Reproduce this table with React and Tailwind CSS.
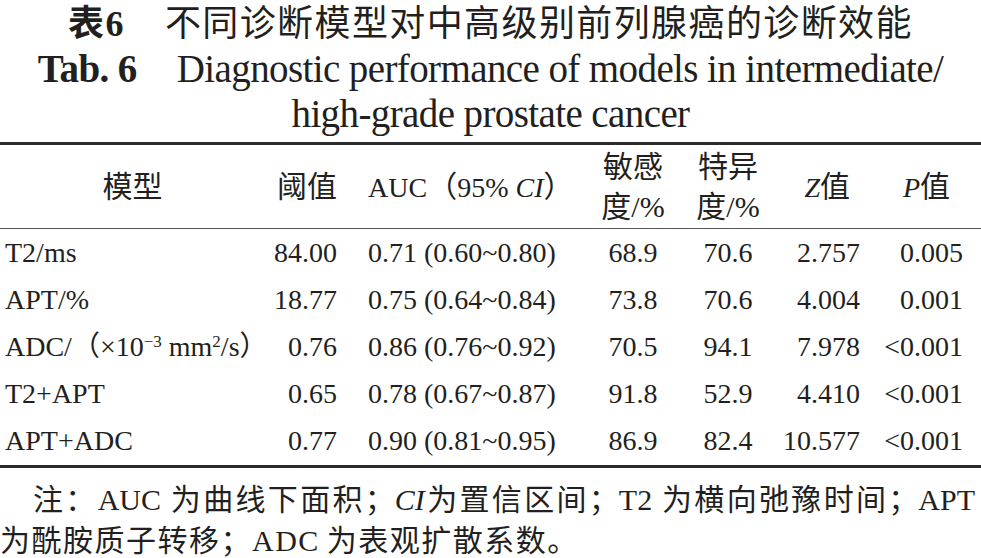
import React from "react";

const serif = { fontFamily: '"Liberation Serif", "Noto Sans CJK SC", serif' };

const rows = [
  ["T2/ms", "84.00", "0.71 (0.60~0.80)", "68.9", "70.6", "2.757", "0.005"],
  ["APT/%", "18.77", "0.75 (0.64~0.84)", "73.8", "70.6", "4.004", "0.001"],
  [
    <span key="adc">
      ADC/（×10<sup className="text-[17px]">−3</sup> mm<sup className="text-[17px]">2</sup>/s）
    </span>,
    "0.76",
    "0.86 (0.76~0.92)",
    "70.5",
    "94.1",
    "7.978",
    "<0.001",
  ],
  ["T2+APT", "0.65", "0.78 (0.67~0.87)", "91.8", "52.9", "4.410", "<0.001"],
  ["APT+ADC", "0.77", "0.90 (0.81~0.95)", "86.9", "82.4", "10.577", "<0.001"],
];

const cols = "grid grid-cols-[260px_77px_253px_86px_104px_80px_103px]";

export default function App() {
  return (
    <div
      className="w-[981px] h-[558px] bg-white text-[#231f20] flex flex-col overflow-hidden"
      style={serif}
    >
      {/* Title */}
      <div className="flex flex-col items-center pt-[1px]">
        <div className="h-[45px] flex items-center text-[36px] leading-none tracking-[1.4px]">
          <span className="font-bold">表6</span>
          <span className="ml-[40px]">不同诊断模型对中高级别前列腺癌的诊断效能</span>
        </div>
        <div className="h-[45px] flex items-center text-[39px] leading-none tracking-[-0.6px]">
          <span className="font-bold">Tab. 6</span>
          <span className="ml-[40px]">Diagnostic performance of models in intermediate/</span>
        </div>
        <div className="h-[45px] flex items-center text-[39px] leading-none tracking-[-0.6px]">
          high-grade prostate cancer
        </div>
      </div>

      {/* Table */}
      <div className="mt-[6px] border-t-[3px] border-[#2b2b2b] text-[28px] leading-none">
        <div className={`${cols} h-[84px] items-center border-b-[1.5px] border-[#555]`}>
          <div className="text-center pl-[5px] text-[30px]">模型</div>
          <div className="text-right text-[30px]">阈值</div>
          <div className="pl-[31px]">
            AUC<span className="text-[30px]">（</span>95% <i>CI</i>
            <span className="text-[30px]">）</span>
          </div>
          <div className="text-center text-[30px] leading-[40px]">
            敏感
            <br />
            度/%
          </div>
          <div className="text-center text-[30px] leading-[40px]">
            特异
            <br />
            度/%
          </div>
          <div className="text-right pr-[10px]">
            <i>Z</i>
            <span className="text-[30px]">值</span>
          </div>
          <div className="text-right pr-[13px]">
            <i>P</i>
            <span className="text-[30px]">值</span>
          </div>
        </div>

        <div className="border-b-[3px] border-[#2b2b2b]">
          {rows.map((r, i) => (
            <div key={i} className={`${cols} h-[47.2px] items-center`}>
              <div className="pl-[5px] whitespace-nowrap">{r[0]}</div>
              <div className="text-right">{r[1]}</div>
              <div className="pl-[31px]">{r[2]}</div>
              <div className="text-center">{r[3]}</div>
              <div className="text-center">{r[4]}</div>
              <div className="text-right">{r[5]}</div>
              <div className="text-right">{r[6]}</div>
            </div>
          ))}
        </div>
      </div>

      {/* Notes */}
      <div className="pt-[11px] text-[30px]">
        <div className="leading-[42px] pl-[33px] pr-[6px] text-justify [text-align-last:justify]">
          注：AUC 为曲线下面积；<i>CI</i>为置信区间；T2 为横向弛豫时间；APT
        </div>
        <div className="mt-[5px] leading-[30px] tracking-[1.5px]">
          为酰胺质子转移；ADC <span className="-ml-[2px]">为表观扩散系数。</span>
        </div>
      </div>
    </div>
  );
}
